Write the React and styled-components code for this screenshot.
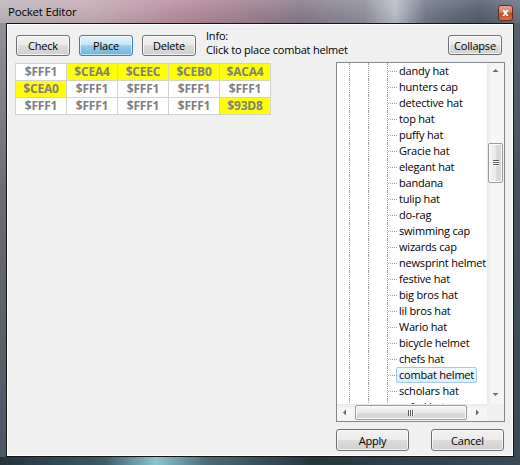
import React from "react";
import styled, { createGlobalStyle, css } from "styled-components";

const Global = createGlobalStyle`
  html, body { margin: 0; padding: 0; background: #2c3a44; }
  body { font-family: "Open Sans", "Noto Sans", sans-serif; }
`;

const uiFont = css`
  font-family: "Open Sans", "Noto Sans", sans-serif;
  font-size: 11px;
  letter-spacing: -0.2px;
`;

const Window = styled.div`
  width: 520px;
  height: 465px;
  box-sizing: border-box;
  display: flex;
  flex-direction: column;
  background:
    linear-gradient(90deg, #24343c 0%, #3a5a66 20%, #8cc4d0 30%, #4a6a76 40%, #26363e 60%, #304450 85%, #3a4a56 100%) bottom / 100% 8px no-repeat,
    linear-gradient(180deg, #9a939a 0%, #6c6c78 40%, #4a5662 100%) left / 6px 100% no-repeat,
    linear-gradient(180deg, #5a6272 0%, #46525e 40%, #3a4a56 100%) right / 6px 100% no-repeat,
    #50585f;
  ${uiFont};
  color: #000;
  overflow: hidden;
`;

const TitleBar = styled.div`
  height: 23px;
  flex: 0 0 23px;
  display: flex;
  align-items: center;
  padding: 0 7px 0 8px;
  box-sizing: border-box;
  background:
    linear-gradient(180deg, rgba(255,255,255,0.15) 0%, rgba(255,255,255,0.04) 50%, rgba(0,0,0,0.05) 100%),
    linear-gradient(90deg, #bab4b8 0%, #c3a9b3 18%, #b48a9b 35%, #9e7e8d 48%, #86788a 58%, #8c8c9a 70%, #b8bcc6 76%, #6e7686 82%, #525c6c 92%, #687080 100%);
`;

const Title = styled.span`
  ${uiFont};
  font-size: 11.5px;
  color: #000;
  flex: 1;
`;

const CloseButton = styled.div`
  width: 15px;
  height: 16px;
  box-sizing: border-box;
  margin-top: 2px;
  border: 1px solid #6b2a1e;
  border-radius: 3px;
  background: linear-gradient(180deg, #e9a58e 0%, #d77a5e 45%, #c04a2a 55%, #d0704c 100%);
  display: flex;
  align-items: center;
  justify-content: center;
  color: #fff;
  font-family: "DejaVu Sans", sans-serif;
  font-size: 10px;
  font-weight: bold;
  line-height: 1;
`;

const Client = styled.div`
  flex: 1;
  margin: 0 6px 8px 6px;
  border: 1px solid #141414;
  box-shadow: inset 0 0 0 1px #ffffff;
  background: #f0f0f0;
  display: flex;
  flex-direction: column;
  padding: 4px 8px 5px 9px;
  box-sizing: border-box;
`;

const TopRow = styled.div`
  display: flex;
  align-items: flex-end;
  height: 28px;
`;

const Button = styled.button`
  ${uiFont};
  color: #000;
  width: ${(p) => p.$w || 54}px;
  height: ${(p) => p.$h || 21}px;
  padding: 0;
  margin: 0;
  box-sizing: border-box;
  border: 1px solid #707070;
  border-radius: 3px;
  box-shadow: inset 0 0 0 1px rgba(255,255,255,0.75);
  background: linear-gradient(180deg, #f2f2f2 0%, #ebebeb 48%, #dddddd 50%, #cfcfcf 100%);
  cursor: default;
  ${(p) =>
    p.$active &&
    css`
      border-color: #3c7fb1;
      box-shadow: inset 0 0 0 1px rgba(255,255,255,0.6);
      background: linear-gradient(180deg, #e5f4fc 0%, #c4e5f6 48%, #98d1ef 50%, #68b3db 100%);
    `}
`;

const ButtonGroup = styled.div`
  display: flex;
  gap: 9px;
  align-items: center;
`;

const Info = styled.div`
  margin-left: 10px;
  line-height: 14px;
  white-space: nowrap;
  transform: translateY(1px);
`;

const CollapseButton = styled(Button)`
  margin-left: auto;
  margin-right: 3px;
  margin-bottom: 1px;
  height: 20px;
`;

const Body = styled.div`
  display: flex;
  margin-top: 6px;
  height: 360px;
`;

const Grid = styled.table`
  border-collapse: collapse;
  align-self: flex-start;
  margin-top: 1px;
  margin-left: -1px;
  background: #fff;
`;

const Cell = styled.td`
  width: 50px;
  height: 16px;
  padding: 0;
  border: 1px solid #d2d2d2;
  text-align: center;
  vertical-align: middle;
  font-family: "Open Sans", "Noto Sans", sans-serif;
  font-weight: 700;
  font-size: 12px;
  line-height: 16px;
  color: #808080;
  background: ${(p) => (p.$hl ? "#ffff00" : "#ffffff")};
`;

const Tree = styled.div`
  margin-left: auto;
  width: 169px;
  height: 360px;
  box-sizing: border-box;
  border: 1px solid #828790;
  background: #fff;
  display: grid;
  grid-template-columns: 1fr 17px;
  grid-template-rows: 1fr 17px;
`;

const Viewport = styled.div`
  overflow: hidden;
  padding-left: 12px;
`;

const Row = styled.div`
  display: flex;
  height: 16px;
  white-space: nowrap;
`;

const Guide = styled.span`
  flex: 0 0 ${(p) => p.$w}px;
  border-left: 1px dotted #a0a0a0;
  box-sizing: border-box;
  position: relative;
  ${(p) =>
    p.$branch &&
    css`
      &::after {
        content: "";
        position: absolute;
        left: 0;
        top: 8px;
        width: 9px;
        border-top: 1px dotted #a0a0a0;
      }
    `}
`;

const Label = styled.span`
  display: inline-block;
  height: 16px;
  line-height: 14px;
  box-sizing: border-box;
  padding: 0 2px;
  border: 1px solid transparent;
  border-radius: 2px;
  ${(p) =>
    p.$selected &&
    css`
      background: linear-gradient(180deg, #f2f9fe 0%, #dcedf9 100%);
      border-color: #a3cbe8;
    `}
`;

const VScroll = styled.div`
  display: flex;
  flex-direction: column;
  background: linear-gradient(90deg, #e9e9e9 0%, #f7f7f7 30%, #f4f4f4 100%);
`;

const HScroll = styled.div`
  display: flex;
  background: linear-gradient(180deg, #e9e9e9 0%, #f7f7f7 30%, #f4f4f4 100%);
`;

const Corner = styled.div`
  background: #f0f0f0;
`;

const ArrowBtn = styled.div`
  flex: 0 0 17px;
  width: 17px;
  height: 17px;
  display: flex;
  align-items: center;
  justify-content: center;
`;

const Track = styled.div`
  flex: 1;
  display: flex;
  flex-direction: ${(p) => (p.$vertical ? "column" : "row")};
`;

const Thumb = styled.div`
  box-sizing: border-box;
  border: 1px solid #9a9a9a;
  border-radius: 2px;
  display: flex;
  align-items: center;
  justify-content: center;
  box-shadow: inset 0 0 0 1px rgba(255,255,255,0.8);
  ${(p) =>
    p.$vertical
      ? css`
          width: 15px;
          margin-left: 1px;
          background: linear-gradient(90deg, #f4f4f4 0%, #eaeaea 50%, #dcdcdc 52%, #d4d4d4 100%);
        `
      : css`
          height: 15px;
          margin-top: 1px;
          background: linear-gradient(180deg, #f4f4f4 0%, #eaeaea 50%, #dcdcdc 52%, #d4d4d4 100%);
        `}
`;

const Grip = styled.div`
  display: flex;
  flex-direction: ${(p) => (p.$vertical ? "column" : "row")};
`;

const GripLine = styled.span`
  display: block;
  background: #5a5a5a;
  box-shadow: ${(p) => (p.$vertical ? "0 1px 0 #fff" : "1px 0 0 #fff")};
  ${(p) =>
    p.$vertical
      ? css`width: 6px; height: 1px; margin-bottom: 1px;`
      : css`width: 1px; height: 6px; margin-right: 1px;`}
`;

const BottomRow = styled.div`
  display: flex;
  justify-content: flex-end;
  gap: 22px;
  margin-top: 7px;
  padding-right: 1px;
`;

const Arrow = ({ dir }) => {
  const pts = {
    up: "1.5,5 4.5,2 7.5,5",
    down: "1.5,2 4.5,5 7.5,2",
    left: "5,1.5 2,4.5 5,7.5",
    right: "2,1.5 5,4.5 2,7.5",
  }[dir];
  return (
    <svg width="9" height="9" viewBox="0 0 9 9">
      <polygon points={pts} fill="#6b6b6b" />
    </svg>
  );
};

const gridData = [
  [["$FFF1", 0], ["$CEA4", 1], ["$CEEC", 1], ["$CEB0", 1], ["$ACA4", 1]],
  [["$CEA0", 1], ["$FFF1", 0], ["$FFF1", 0], ["$FFF1", 0], ["$FFF1", 0]],
  [["$FFF1", 0], ["$FFF1", 0], ["$FFF1", 0], ["$FFF1", 0], ["$93D8", 1]],
];

const items = [
  "dandy hat",
  "hunters cap",
  "detective hat",
  "top hat",
  "puffy hat",
  "Gracie hat",
  "elegant hat",
  "bandana",
  "tulip hat",
  "do-rag",
  "swimming cap",
  "wizards cap",
  "newsprint helmet",
  "festive hat",
  "big bros hat",
  "lil bros hat",
  "Wario hat",
  "bicycle helmet",
  "chefs hat",
  "combat helmet",
  "scholars hat",
  "safari hat",
];

export default function App() {
  return (
    <>
      <Global />
      <Window>
        <TitleBar>
          <Title>Pocket Editor</Title>
          <CloseButton>x</CloseButton>
        </TitleBar>
        <Client>
          <TopRow>
            <ButtonGroup>
              <Button>Check</Button>
              <Button $active>Place</Button>
              <Button>Delete</Button>
            </ButtonGroup>
            <Info>
              Info:
              <br />
              Click to place combat helmet
            </Info>
            <CollapseButton>Collapse</CollapseButton>
          </TopRow>
          <Body>
            <Grid>
              <tbody>
                {gridData.map((row, r) => (
                  <tr key={r}>
                    {row.map(([v, hl], c) => (
                      <Cell key={c} $hl={!!hl}>
                        {v}
                      </Cell>
                    ))}
                  </tr>
                ))}
              </tbody>
            </Grid>
            <Tree>
              <Viewport>
                {items.map((it) => (
                  <Row key={it}>
                    <Guide $w={19} />
                    <Guide $w={19} />
                    <Guide $w={9} $branch />
                    <Label $selected={it === "combat helmet"}>{it}</Label>
                  </Row>
                ))}
              </Viewport>
              <VScroll>
                <ArrowBtn>
                  <Arrow dir="up" />
                </ArrowBtn>
                <Track $vertical>
                  <Thumb $vertical style={{ marginTop: 63, height: 40 }}>
                    <Grip $vertical>
                      <GripLine $vertical />
                      <GripLine $vertical />
                      <GripLine $vertical />
                    </Grip>
                  </Thumb>
                </Track>
                <ArrowBtn>
                  <Arrow dir="down" />
                </ArrowBtn>
              </VScroll>
              <HScroll>
                <ArrowBtn>
                  <Arrow dir="left" />
                </ArrowBtn>
                <Track>
                  <Thumb style={{ marginLeft: 1, width: 112 }}>
                    <Grip>
                      <GripLine />
                      <GripLine />
                      <GripLine />
                    </Grip>
                  </Thumb>
                </Track>
                <ArrowBtn>
                  <Arrow dir="right" />
                </ArrowBtn>
              </HScroll>
              <Corner />
            </Tree>
          </Body>
          <BottomRow>
            <Button $w={73} $h={22}>Apply</Button>
            <Button $w={73} $h={22}>Cancel</Button>
          </BottomRow>
        </Client>
      </Window>
    </>
  );
}
